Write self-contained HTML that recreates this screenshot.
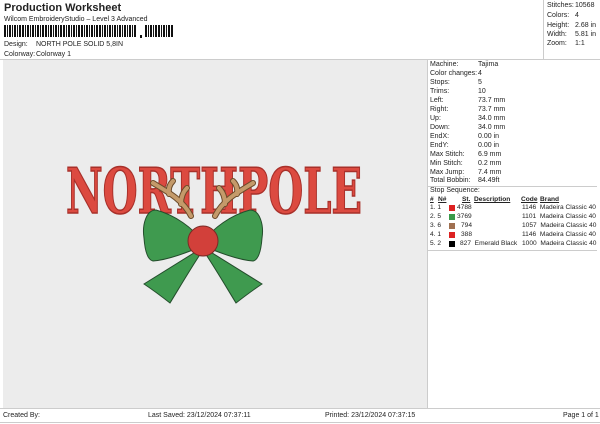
<!DOCTYPE html>
<html><head><meta charset="utf-8"><style>
*{margin:0;padding:0;box-sizing:border-box}
body{width:600px;height:424px;background:#fff;font-family:"Liberation Sans",sans-serif;color:#222;position:relative;overflow:hidden;font-size:7px}
.a{position:absolute;white-space:nowrap}
.row{position:absolute;left:430px;white-space:nowrap;font-size:7px}
.row span{position:absolute;left:48px}
.st{position:absolute;font-size:7px;white-space:nowrap}
.t{font-size:6.6px}
</style></head><body>
<div class="a" style="left:4px;top:2px;font-size:11px;font-weight:bold">Production Worksheet</div>
<div class="a" style="left:4px;top:16px">Wilcom EmbroideryStudio – Level 3 Advanced</div>
<svg class="a" style="left:4px;top:25px" width="170" height="14">
<g fill="#111">
<rect x="0" y="0" width="2" height="12"/><rect x="3" y="0" width="1" height="12"/><rect x="5" y="0" width="2" height="12"/><rect x="8" y="0" width="1" height="12"/><rect x="10" y="0" width="2" height="12"/><rect x="13" y="0" width="1" height="12"/><rect x="15" y="0" width="2" height="12"/><rect x="18" y="0" width="2" height="12"/><rect x="21" y="0" width="1" height="12"/><rect x="23" y="0" width="2" height="12"/><rect x="26" y="0" width="1" height="12"/><rect x="28" y="0" width="2" height="12"/><rect x="31" y="0" width="1" height="12"/><rect x="33" y="0" width="2" height="12"/><rect x="36" y="0" width="1" height="12"/><rect x="38" y="0" width="2" height="12"/><rect x="41" y="0" width="2" height="12"/><rect x="44" y="0" width="1" height="12"/><rect x="46" y="0" width="2" height="12"/><rect x="49" y="0" width="1" height="12"/><rect x="51" y="0" width="2" height="12"/><rect x="54" y="0" width="1" height="12"/><rect x="56" y="0" width="2" height="12"/><rect x="59" y="0" width="2" height="12"/><rect x="62" y="0" width="1" height="12"/><rect x="64" y="0" width="2" height="12"/><rect x="67" y="0" width="1" height="12"/><rect x="69" y="0" width="2" height="12"/><rect x="72" y="0" width="1" height="12"/><rect x="74" y="0" width="2" height="12"/><rect x="77" y="0" width="2" height="12"/><rect x="80" y="0" width="1" height="12"/><rect x="82" y="0" width="2" height="12"/><rect x="85" y="0" width="1" height="12"/><rect x="87" y="0" width="2" height="12"/><rect x="90" y="0" width="1" height="12"/><rect x="92" y="0" width="2" height="12"/><rect x="95" y="0" width="2" height="12"/><rect x="98" y="0" width="1" height="12"/><rect x="100" y="0" width="2" height="12"/><rect x="103" y="0" width="1" height="12"/><rect x="105" y="0" width="2" height="12"/><rect x="108" y="0" width="1" height="12"/><rect x="110" y="0" width="2" height="12"/><rect x="113" y="0" width="1" height="12"/><rect x="115" y="0" width="2" height="12"/><rect x="118" y="0" width="1" height="12"/><rect x="120" y="0" width="2" height="12"/><rect x="123" y="0" width="1" height="12"/><rect x="125" y="0" width="2" height="12"/><rect x="128" y="0" width="1" height="12"/><rect x="130" y="0" width="2" height="12"/>
<rect x="136" y="10" width="2" height="3"/>
<rect x="141" y="0" width="2" height="12"/><rect x="144" y="0" width="1" height="12"/><rect x="146" y="0" width="2" height="12"/><rect x="149" y="0" width="1" height="12"/><rect x="151" y="0" width="2" height="12"/><rect x="154" y="0" width="2" height="12"/><rect x="157" y="0" width="1" height="12"/><rect x="159" y="0" width="2" height="12"/><rect x="162" y="0" width="1" height="12"/><rect x="164" y="0" width="2" height="12"/><rect x="167" y="0" width="2" height="12"/>
</g></svg>
<div class="a" style="left:4px;top:41px">Design:</div>
<div class="a" style="left:36px;top:41px">NORTH POLE SOLID 5,8IN</div>
<div class="a" style="left:4px;top:51px">Colorway:</div>
<div class="a" style="left:36px;top:51px">Colorway 1</div>
<div class="a" style="left:0;top:59px;width:600px;height:1px;background:#ccc"></div>
<div class="a" style="left:543px;top:0;width:1px;height:59px;background:#ccc"></div>
<div class="st" style="left:547px;top:2px">Stitches:</div><div class="st" style="left:575px;top:2px">10568</div>
<div class="st" style="left:547px;top:12px">Colors:</div><div class="st" style="left:575px;top:12px">4</div>
<div class="st" style="left:547px;top:22px">Height:</div><div class="st" style="left:575px;top:22px">2.68 in</div>
<div class="st" style="left:547px;top:31px">Width:</div><div class="st" style="left:575px;top:31px">5.81 in</div>
<div class="st" style="left:547px;top:40px">Zoom:</div><div class="st" style="left:575px;top:40px">1:1</div>
<div class="a" style="left:3px;top:60px;width:424px;height:348px;background:#ececec"></div>
<div class="a" style="left:427px;top:60px;width:1px;height:348px;background:#ccc"></div>
<svg class="a" style="left:3px;top:60px" width="424" height="348">
<text x="63" y="153" font-family="DejaVu Serif" font-weight="bold" font-size="63" textLength="296" lengthAdjust="spacingAndGlyphs" fill="#dc4a40" stroke="#a8302a" stroke-width="1.5">NORTHPOLE</text>
<g fill="none" stroke-linecap="round">
<g stroke="#6b4a2a" stroke-width="6">
<path d="M188 156 C180 140 165 132 150 123"/>
<path d="M166 134 C165 128 167 124 170 121"/>
<path d="M178 144 C178 136 181 131 184 128"/>
<path d="M212 156 C220 140 235 132 250 123"/>
<path d="M234 134 C235 128 233 124 230 121"/>
<path d="M222 144 C222 136 219 131 216 128"/>
</g>
<g stroke="#c49a6a" stroke-width="4">
<path d="M188 156 C180 140 165 132 150 123"/>
<path d="M166 134 C165 128 167 124 170 121"/>
<path d="M178 144 C178 136 181 131 184 128"/>
<path d="M212 156 C220 140 235 132 250 123"/>
<path d="M234 134 C235 128 233 124 230 121"/>
<path d="M222 144 C222 136 219 131 216 128"/>
</g>
</g>
<g fill="#3f9a4f" stroke="#244d2c" stroke-width="1">
<path d="M194 191 L141 224 C150 230 158 236 167 243 C178 225 188 208 198 193 Z"/>
<path d="M206 191 L259 224 C250 230 242 236 233 243 C222 225 212 208 202 193 Z"/>
<path d="M200 182 C190 168 172 155 153 150 C143 150 139 165 141 178 C142 192 145 200 150 201 C165 200 185 192 200 186 Z"/>
<path d="M200 182 C210 168 228 155 247 150 C257 150 261 165 259 178 C258 192 255 200 250 201 C235 200 215 192 200 186 Z"/>
</g>
<circle cx="200" cy="181" r="15" fill="#d2403a" stroke="#7a2a25" stroke-width="1"/>
</svg>
<div class="row" style="top:61px">Machine:<span>Tajima</span></div>
<div class="row" style="top:70px">Color changes:<span>4</span></div>
<div class="row" style="top:79px">Stops:<span>5</span></div>
<div class="row" style="top:88px">Trims:<span>10</span></div>
<div class="row" style="top:97px">Left:<span>73.7 mm</span></div>
<div class="row" style="top:106px">Right:<span>73.7 mm</span></div>
<div class="row" style="top:115px">Up:<span>34.0 mm</span></div>
<div class="row" style="top:124px">Down:<span>34.0 mm</span></div>
<div class="row" style="top:133px">EndX:<span>0.00 in</span></div>
<div class="row" style="top:142px">EndY:<span>0.00 in</span></div>
<div class="row" style="top:151px">Max Stitch:<span>6.9 mm</span></div>
<div class="row" style="top:160px">Min Stitch:<span>0.2 mm</span></div>
<div class="row" style="top:169px">Max Jump:<span>7.4 mm</span></div>
<div class="row" style="top:177px">Total Bobbin:<span>84.49ft</span></div>
<div class="a" style="left:428px;top:186px;width:169px;height:1px;background:#ccc"></div>
<div class="row" style="top:187px">Stop Sequence:</div>
<div class="a t" style="left:430px;top:196px;font-weight:bold;text-decoration:underline">#</div>
<div class="a t" style="left:438px;top:196px;font-weight:bold;text-decoration:underline">N#</div>
<div class="a t" style="left:462px;top:196px;font-weight:bold;text-decoration:underline">St.</div>
<div class="a t" style="left:474px;top:196px;font-weight:bold;text-decoration:underline">Description</div>
<div class="a t" style="left:521px;top:196px;font-weight:bold;text-decoration:underline">Code</div>
<div class="a t" style="left:540px;top:196px;font-weight:bold;text-decoration:underline">Brand</div>
<div class="a t" style="left:430px;top:204px">1. 1</div><div class="a" style="left:449px;top:205px;width:6px;height:6px;background:#d22"></div><div class="a t" style="left:457px;top:204px">4788</div><div class="a t" style="left:522px;top:204px">1146&nbsp; Madeira Classic 40</div>
<div class="a t" style="left:430px;top:213px">2. 5</div><div class="a" style="left:449px;top:214px;width:6px;height:6px;background:#3a9a4a"></div><div class="a t" style="left:457px;top:213px">3769</div><div class="a t" style="left:522px;top:213px">1101&nbsp; Madeira Classic 40</div>
<div class="a t" style="left:430px;top:222px">3. 6</div><div class="a" style="left:449px;top:223px;width:6px;height:6px;background:#a07050"></div><div class="a t" style="left:461px;top:222px">794</div><div class="a t" style="left:522px;top:222px">1057&nbsp; Madeira Classic 40</div>
<div class="a t" style="left:430px;top:231px">4. 1</div><div class="a" style="left:449px;top:232px;width:6px;height:6px;background:#d22"></div><div class="a t" style="left:461px;top:231px">388</div><div class="a t" style="left:522px;top:231px">1146&nbsp; Madeira Classic 40</div>
<div class="a t" style="left:430px;top:240px">5. 2</div><div class="a" style="left:449px;top:241px;width:6px;height:6px;background:#000"></div><div class="a t" style="left:460px;top:240px">827&nbsp; Emerald Black</div><div class="a t" style="left:522px;top:240px">1000&nbsp; Madeira Classic 40</div>
<div class="a" style="left:428px;top:250px;width:169px;height:1px;background:#ccc"></div>
<div class="a" style="left:0;top:408px;width:600px;height:1px;background:#ccc"></div>
<div class="a" style="left:3px;top:412px">Created By:</div>
<div class="a" style="left:148px;top:412px">Last Saved: 23/12/2024 07:37:11</div>
<div class="a" style="left:325px;top:412px">Printed: 23/12/2024 07:37:15</div>
<div class="a" style="left:563px;top:412px">Page 1 of 1</div>
<div class="a" style="left:0;top:422px;width:600px;height:1px;background:#ccc"></div>
</body></html>
